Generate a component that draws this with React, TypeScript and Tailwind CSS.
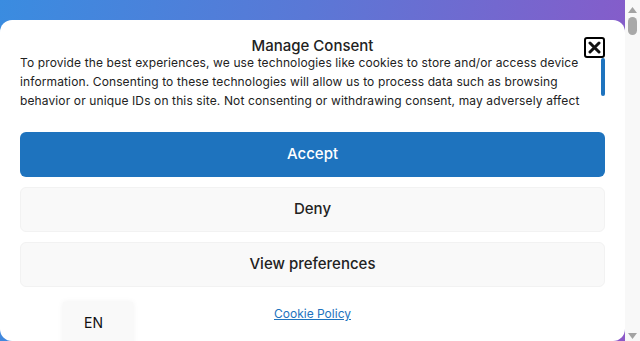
import React from "react";

export default function App() {
  return (
    <div className="w-[640px] h-[341px] flex overflow-hidden font-['Inter',sans-serif]">
      <div className="relative flex-1 pt-[20px] bg-[linear-gradient(100deg,#3a8ce0_0%,#5a78d6_45%,#8c58c8_100%)]">
        <div className="relative h-[321px] bg-white rounded-[12px] px-[20px] pt-[16px] flex flex-col">
          <div className="text-center text-[15px] leading-[20px] font-medium text-[#222]">Manage Consent</div>
          <button className="absolute left-[584px] top-[17px] w-[21px] h-[21px] border-2 border-black rounded-[3px] flex items-center justify-center bg-white">
            <svg width="13" height="13" viewBox="0 0 13 13">
              <path d="M2 2 L11 11 M11 2 L2 11" stroke="#111" strokeWidth="3" strokeLinecap="round" />
            </svg>
          </button>
          <div className="flex h-[59px] mt-[-3px]">
            <div className="flex-1 overflow-hidden text-[12px] leading-[19px] tracking-[0.12px] text-[#222] pr-[5px]">
              To provide the best experiences, we use technologies like cookies to store and/or access device information. Consenting to these technologies will allow us to process data such as browsing behavior or unique IDs on this site. Not consenting or withdrawing consent, may adversely affect certain features and functions.
            </div>
            <div className="w-[4px] pt-[5px]">
              <div className="h-[38px] bg-[#1e73be] rounded-[2px]" />
            </div>
          </div>
          <div className="mt-[20px] flex flex-col gap-[10px]">
            <button className="h-[45px] rounded-[6px] bg-[#1e73be] text-white text-[15px] font-medium">Accept</button>
            <button className="h-[45px] rounded-[6px] bg-[#f9f9f9] border border-[#f2f2f2] text-[#222] text-[15px] font-medium">Deny</button>
            <button className="h-[45px] rounded-[6px] bg-[#f9f9f9] border border-[#f2f2f2] text-[#222] text-[15px] font-medium">View preferences</button>
          </div>
          <div className="mt-[17px] text-center leading-[16px]">
            <a className="text-[12px] text-[#1e73be] underline">Cookie Policy</a>
          </div>
        </div>
        <div className="absolute left-[63px] top-[302px] w-[70px] h-[45px] bg-[#f9f9f9] shadow-[0_0_6px_rgba(0,0,0,0.06)] flex items-start pl-[21px] pt-[10px] text-[14px] text-[#111]">
          EN
        </div>
      </div>
      <div className="w-[15px] h-[341px] bg-[#f8f8f8] flex flex-col items-center">
        <svg width="9" height="6" viewBox="0 0 9 6" className="mt-[7px]">
          <path d="M0 6 L4.5 0 L9 6 Z" fill="#a3a3a3" />
        </svg>
        <div className="mt-[4px] w-[9px] h-[18px] rounded-full bg-[#a8a8a8]" />
        <div className="flex-1" />
        <svg width="9" height="6" viewBox="0 0 9 6" className="mb-[2px]">
          <path d="M0 0 L4.5 6 L9 0 Z" fill="#a3a3a3" />
        </svg>
      </div>
    </div>
  );
}
